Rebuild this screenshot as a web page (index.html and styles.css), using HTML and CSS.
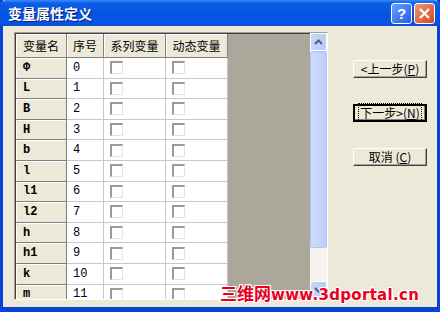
FILE: index.html
```html
<!DOCTYPE html>
<html lang="zh-CN">
<head>
  <meta charset="UTF-8">
  <title>变量属性定义</title>
  <link rel="stylesheet" href="styles.css">
</head>
<body>
  <div class="window">
    <div class="titlebar">
      <span class="title">变量属性定义</span>
      <span class="tb-btn help">?</span>
      <span class="tb-btn close">
        <svg width="13" height="13" viewBox="0 0 13 13"><path d="M2 2 L11 11 M11 2 L2 11" stroke="#fff" stroke-width="2.2"/></svg>
      </span>
    </div>
    <div class="client">
      <div class="grid-frame">
        <div class="grid">
          <div class="hd">变量名</div><div class="hd">序号</div><div class="hd">系列变量</div><div class="hd">动态变量</div>
          <div class="rh">&#934;</div><div class="num">0</div><div class="cb"><i></i></div><div class="cb"><i></i></div>
          <div class="rh">L</div><div class="num">1</div><div class="cb"><i></i></div><div class="cb"><i></i></div>
          <div class="rh">B</div><div class="num">2</div><div class="cb"><i></i></div><div class="cb"><i></i></div>
          <div class="rh">H</div><div class="num">3</div><div class="cb"><i></i></div><div class="cb"><i></i></div>
          <div class="rh">b</div><div class="num">4</div><div class="cb"><i></i></div><div class="cb"><i></i></div>
          <div class="rh">l</div><div class="num">5</div><div class="cb"><i></i></div><div class="cb"><i></i></div>
          <div class="rh">l1</div><div class="num">6</div><div class="cb"><i></i></div><div class="cb"><i></i></div>
          <div class="rh">l2</div><div class="num">7</div><div class="cb"><i></i></div><div class="cb"><i></i></div>
          <div class="rh">h</div><div class="num">8</div><div class="cb"><i></i></div><div class="cb"><i></i></div>
          <div class="rh">h1</div><div class="num">9</div><div class="cb"><i></i></div><div class="cb"><i></i></div>
          <div class="rh">k</div><div class="num">10</div><div class="cb"><i></i></div><div class="cb"><i></i></div>
          <div class="rh">m</div><div class="num">11</div><div class="cb"><i></i></div><div class="cb"><i></i></div>
        </div>
        <div class="empty"></div>
        <div class="scrollbar">
          <div class="sb-btn">
            <svg width="9" height="6" viewBox="0 0 9 6"><path d="M1 5 L4.5 1.5 L8 5" fill="none" stroke="#4d6185" stroke-width="2"/></svg>
          </div>
          <div class="sb-thumb"></div>
          <div class="sb-track"></div>
          <div class="sb-btn">
            <svg width="9" height="6" viewBox="0 0 9 6"><path d="M1 1 L4.5 4.5 L8 1" fill="none" stroke="#4d6185" stroke-width="2"/></svg>
          </div>
        </div>
      </div>
      <div class="buttons">
        <button class="btn">&lt;上一步(<u>P</u>)</button>
        <button class="btn default"><span class="focus">下一步&gt;(<u>N</u>)</span></button>
        <button class="btn">取消 (<u>C</u>)</button>
      </div>
    </div>
    <div class="watermark">三维网<span class="url">www.3dportal.cn</span></div>
  </div>
</body>
</html>
```

FILE: styles.css
```css
body {
  margin: 0;
  width: 440px;
  height: 312px;
  overflow: hidden;
  font-family: "Noto Sans CJK SC", sans-serif;
  font-size: 12px;
}
.window {
  position: relative;
  box-sizing: border-box;
  width: 440px;
  height: 312px;
  background-color: #ece9d8;
  border: 3px solid #0842d8;
  border-top: none;
  border-bottom-width: 5px;
}
.titlebar {
  display: flex;
  align-items: center;
  height: 26px;
  margin: 0 -3px;
  padding: 0 5px 0 8px;
  background: linear-gradient(#3d8bf5 0%, #0a5ee8 12%, #0553e0 50%, #0555e8 85%, #0a4cc8 100%);
  border-radius: 6px 6px 0 0;
}
.title {
  flex: 1;
  color: #fff;
  font-weight: bold;
  font-size: 14px;
  text-shadow: 1px 1px 0 #0a1f6a;
}
.tb-btn {
  display: flex;
  align-items: center;
  justify-content: center;
  width: 19px;
  height: 19px;
  margin-left: 2px;
  border: 1px solid #fff;
  border-radius: 3px;
  color: #fff;
  font: bold 15px "Liberation Sans", sans-serif;
}
.help {
  background: linear-gradient(135deg, #6aa0ff, #1e5fe8);
}
.close {
  background: linear-gradient(135deg, #f09a7a, #d5461f);
}
.client {
  display: flex;
  padding: 6px 0 0 11px;
}
.grid-frame {
  display: flex;
  width: 312px;
  height: 266px;
  border: 1px solid;
  border-color: #a0a0a0 #fff #fff #a0a0a0;
  overflow: hidden;
}
.grid {
  display: grid;
  grid-template-columns: 51px 37px 62px 62px;
  grid-auto-rows: 20.6px;
  grid-template-rows: 24px;
  align-content: start;
  background-color: #fff;
  border-left: 1px solid #404040;
  border-top: 1px solid #404040;
}
.hd {
  display: flex;
  align-items: center;
  justify-content: center;
  background-color: #ece9d8;
  border-right: 1px solid #808080;
  border-bottom: 1px solid #808080;
  box-shadow: inset 1px 1px 0 #fff;
  color: #000;
}
.rh {
  display: flex;
  align-items: center;
  padding-left: 7px;
  background-color: #ece9d8;
  border-right: 1px solid #808080;
  border-bottom: 1px solid #808080;
  box-shadow: inset 1px 1px 0 #fff;
  font: bold 12px "Liberation Mono", monospace;
}
.num {
  display: flex;
  align-items: center;
  padding-left: 6px;
  border-right: 1px solid #c8c8c8;
  border-bottom: 1px solid #c8c8c8;
  font: 12px "Liberation Mono", monospace;
}
.cb {
  display: flex;
  align-items: center;
  padding-left: 6px;
  border-right: 1px solid #c8c8c8;
  border-bottom: 1px solid #c8c8c8;
}
.cb i {
  display: block;
  width: 13px;
  height: 13px;
  border-left: 2px solid #9a9a9a;
  border-top: 2px solid #9a9a9a;
  border-right: 1px solid #e4e4e4;
  border-bottom: 1px solid #e4e4e4;
  box-sizing: border-box;
}
.empty {
  flex: 1;
  background-color: #aba89b;
  border-top: 1px solid #404040;
}
.scrollbar {
  display: flex;
  flex-direction: column;
  width: 17px;
  background-color: #f4f3ee;
}
.sb-btn {
  display: flex;
  align-items: center;
  justify-content: center;
  height: 16px;
  background: linear-gradient(90deg, #c6d6fb, #b8ccf8);
  border: 1px solid #fff;
  border-radius: 2px;
}
.sb-thumb {
  height: 195px;
  background: linear-gradient(90deg, #cddbfc, #bccff9);
  border: 1px solid #b0c3f2;
  border-radius: 2px;
}
.sb-track {
  flex: 1;
}
.buttons {
  display: flex;
  flex-direction: column;
  gap: 26px;
  padding: 28px 0 0 25px;
}
.btn {
  width: 74px;
  height: 18px;
  padding: 0;
  background-color: #ece9d8;
  border: 1px solid;
  border-color: #fff #404040 #404040 #fff;
  box-shadow: inset -1px -1px 0 #a0a0a0;
  font: 12px "Noto Sans CJK SC", sans-serif;
  line-height: 14px;
  color: #000;
}
.btn.default {
  border: 2px solid #000;
  box-shadow: inset -1px -1px 0 #808080;
}
.focus {
  padding: 0 1px;
  outline: 1px dotted #000;
}
.watermark {
  position: absolute;
  left: 217px;
  bottom: 2px;
  color: #e8001c;
  font: bold 17px "Noto Sans CJK SC", sans-serif;
  text-shadow: 1px 1px 0 #fff, -1px -1px 0 #fff, 1px -1px 0 #fff, -1px 1px 0 #fff,
    1px 0 0 #fff, -1px 0 0 #fff, 0 1px 0 #fff, 0 -1px 0 #fff;
}
.url {
  font: bold 15px "DejaVu Sans", sans-serif;
  letter-spacing: 0.3px;
}
```
